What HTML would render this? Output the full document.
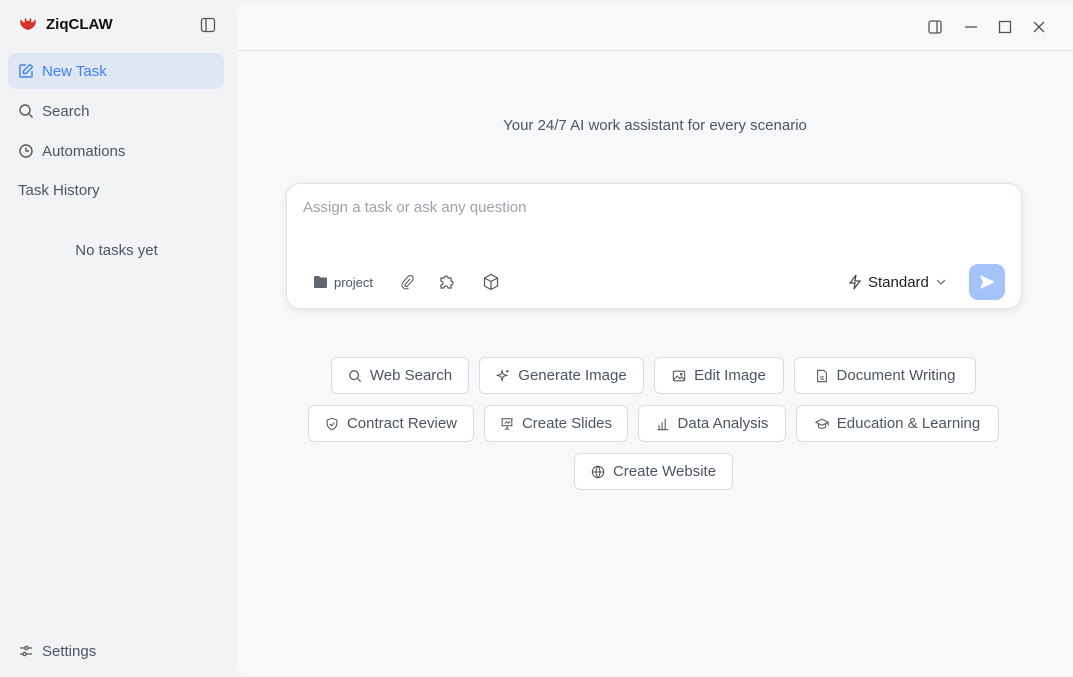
<!DOCTYPE html>
<html><head><style>
*{box-sizing:border-box;margin:0;padding:0}
body{width:1073px;height:677px;background:#f2f3f5;font-family:"Liberation Sans",sans-serif;position:relative;overflow:hidden;color:#333}
.abs{position:absolute}
.nav{position:absolute;left:8px;width:216px;height:36px;display:flex;align-items:center;padding-left:10px;font-size:15px;color:#4b5563;border-radius:8px}
.nav svg{margin-right:8px}
.main{position:absolute;left:237px;top:3px;width:836px;height:673px;background:#f7f8fa;border-radius:10px 0 0 10px}
.chip{position:absolute;height:37px;border:1px solid #d9dce1;border-radius:6px;background:#fff;display:flex;align-items:center;justify-content:center;font-size:15px;color:#4b5563}
.chip svg{margin-right:8px}
</style></head><body>
<svg class="abs" style="left:18px;top:15px" width="20" height="20" viewBox="0 0 20 20"><path d="M3 4c-2 4 0 9 7 11c7-2 9-7 7-11c-1 3-3 4-4 3c1-2 0-4-1-4c0 2-1 3-2 3s-2-1-2-3c-1 0-2 2-1 4c-1 1-3 0-4-3z" fill="#d7332a"/></svg>
<div class="abs" style="left:46px;top:16px;font-size:15px;font-weight:bold;color:#111">ZiqCLAW</div>
<svg class="abs" style="left:200px;top:17px" width="16" height="16" viewBox="0 0 16 16" fill="none" stroke="#555" stroke-width="1.3"><rect x="1.5" y="1.5" width="13" height="13" rx="2.5"/><path d="M6 1.5v13"/></svg>
<div class="nav" style="top:53px;background:#e1e7f2;color:#3b82f6"><svg width="16" height="16" viewBox="0 0 16 16" fill="none" stroke="#3b82f6" stroke-width="1.4"><path d="M8 2H3a1 1 0 0 0-1 1v10a1 1 0 0 0 1 1h10a1 1 0 0 0 1-1V8"/><path d="M12 1.5l2.5 2.5L8 10.5H5.5V8z"/></svg>New Task</div>
<div class="nav" style="top:93px"><svg width="16" height="16" viewBox="0 0 16 16" fill="none" stroke="#555" stroke-width="1.4"><circle cx="7" cy="7" r="5"/><path d="M11 11l3.5 3.5"/></svg>Search</div>
<div class="nav" style="top:133px"><svg width="16" height="16" viewBox="0 0 16 16" fill="none" stroke="#555" stroke-width="1.4"><circle cx="8" cy="8" r="6"/><path d="M8 4.5V8h3"/></svg>Automations</div>
<div class="abs" style="left:18px;top:182px;font-size:15px;color:#4b5563">Task History</div>
<div class="abs" style="left:0;width:233px;top:242px;text-align:center;font-size:15px;color:#4b5563">No tasks yet</div>
<div class="nav" style="top:633px"><svg width="16" height="16" viewBox="0 0 16 16" fill="none" stroke="#555" stroke-width="1.3"><path d="M2 5h5M10 5h4M2 11h3M8 11h6"/><circle cx="8.5" cy="5" r="1.6"/><circle cx="6.5" cy="11" r="1.6"/></svg>Settings</div>

<div class="main">
<div class="abs" style="left:0;right:0;top:47px;border-top:1px solid #e3e5e9"></div>
<svg class="abs" style="left:690px;top:16px" width="16" height="16" viewBox="0 0 16 16" fill="none" stroke="#555" stroke-width="1.3"><rect x="2" y="2" width="12" height="12" rx="2"/><path d="M10 2v12"/></svg>
<svg class="abs" style="left:726px;top:16px" width="16" height="16" viewBox="0 0 16 16" stroke="#555" stroke-width="1.3"><path d="M2 8h12"/></svg>
<svg class="abs" style="left:760px;top:16px" width="16" height="16" viewBox="0 0 16 16" fill="none" stroke="#555" stroke-width="1.3"><rect x="2.5" y="2.5" width="11" height="11"/></svg>
<svg class="abs" style="left:794px;top:16px" width="16" height="16" viewBox="0 0 16 16" stroke="#555" stroke-width="1.3"><path d="M3 3l10 10M13 3L3 13"/></svg>
<div class="abs" style="left:0;right:0;top:114px;text-align:center;font-size:15px;color:#4b5563">Your 24/7 AI work assistant for every scenario</div>
<div class="abs" style="left:49px;top:180px;width:736px;height:126px;background:#fff;border:1px solid #dfe3ea;border-radius:14px;box-shadow:0 2px 8px rgba(0,0,0,.08)">
 <div class="abs" style="left:16px;top:15px;font-size:15px;color:#9ca3af">Assign a task or ask any question</div>
 <svg class="abs" style="left:26px;top:91px" width="15" height="14" viewBox="0 0 15 14"><path d="M1 2a1 1 0 0 1 1-1h4l1.5 1.5H13a1 1 0 0 1 1 1V12a1 1 0 0 1-1 1H2a1 1 0 0 1-1-1z" fill="#5f6672"/></svg>
 <div class="abs" style="left:47px;top:91px;font-size:13px;color:#4b5563">project</div>
 <svg class="abs" style="left:112px;top:90px" width="16" height="16" viewBox="0 0 16 16" fill="none" stroke="#666" stroke-width="1.2"><path d="M11 5l-5 5.5a1.5 1.5 0 0 0 2 2l5.5-6a3 3 0 0 0-4.5-4L3.5 9a4 4 0 0 0 6 5"/></svg>
 <svg class="abs" style="left:151px;top:89px" width="18" height="18" viewBox="0 0 18 18" fill="none" stroke="#555" stroke-width="1.2"><path d="M3 5h3a2 2 0 1 1 4 0h3v3a2 2 0 1 1 0 4v3h-3a2 2 0 1 0-4 0H3v-3a2 2 0 1 0 0-4z"/></svg>
 <svg class="abs" style="left:195px;top:89px" width="18" height="18" viewBox="0 0 18 18" fill="none" stroke="#555" stroke-width="1.2"><path d="M9 1.5l6.5 3.5v8L9 16.5 2.5 13V5zM2.5 5L9 8.5 15.5 5M9 8.5v8"/></svg>
 <svg class="abs" style="left:560px;top:90px" width="16" height="16" viewBox="0 0 16 16" fill="none" stroke="#444" stroke-width="1.2"><path d="M9 1L3 9h5l-1 6 6-8H8z"/></svg>
 <div class="abs" style="left:581px;top:90px;font-size:15px;color:#222">Standard</div>
 <svg class="abs" style="left:648px;top:93px" width="12" height="10" viewBox="0 0 12 10" fill="none" stroke="#666" stroke-width="1.2"><path d="M2 3l4 4 4-4"/></svg>
 <div class="abs" style="left:682px;top:80px;width:36px;height:36px;border-radius:9px;background:#a4c3fb"><svg style="margin:9px" width="18" height="18" viewBox="0 0 18 18"><path d="M2 2l15 7-15 7 3-7z" fill="#fff"/></svg></div>
</div>
</div>
<div class="chip" style="left:331px;top:357px;width:138px"><svg width="14" height="14" viewBox="0 0 16 16" fill="none" stroke="#555" stroke-width="1.4"><circle cx="7" cy="7" r="5"/><path d="M11 11l3.5 3.5"/></svg>Web Search</div>
<div class="chip" style="left:479px;top:357px;width:165px"><svg width="14" height="14" viewBox="0 0 16 16" fill="none" stroke="#555" stroke-width="1.2"><path d="M7 2l1.3 4 4 1.3-4 1.3L7 13l-1.3-4.4-4-1.3 4-1.3zM13 1v3M11.5 2.5h3"/></svg>Generate Image</div>
<div class="chip" style="left:654px;top:357px;width:130px"><svg width="14" height="14" viewBox="0 0 16 16" fill="none" stroke="#555" stroke-width="1.2"><rect x="1.5" y="2.5" width="13" height="11" rx="1.5"/><path d="M2 12l4-4 3 3 2-2 3 3"/><circle cx="10.5" cy="6" r="1"/></svg>Edit Image</div>
<div class="chip" style="left:794px;top:357px;width:182px"><svg width="14" height="14" viewBox="0 0 16 16" fill="none" stroke="#555" stroke-width="1.2"><path d="M3 1.5h7l3 3v10H3zM6 9h4M6 11.5h4"/></svg>Document Writing</div>
<div class="chip" style="left:308px;top:405px;width:166px"><svg width="14" height="14" viewBox="0 0 16 16" fill="none" stroke="#555" stroke-width="1.2"><path d="M8 1.5l5.5 2v4.5c0 3-2.5 5.5-5.5 6.5-3-1-5.5-3.5-5.5-6.5V3.5zM5.5 8l2 2 3-3.5"/></svg>Contract Review</div>
<div class="chip" style="left:484px;top:405px;width:144px"><svg width="14" height="14" viewBox="0 0 16 16" fill="none" stroke="#555" stroke-width="1.2"><path d="M1.5 2h13M2.5 2v8h11V2M8 10v3M5.5 14.5L8 13l2.5 1.5M5.5 7.5l2-2 2 1.5 2-2"/></svg>Create Slides</div>
<div class="chip" style="left:638px;top:405px;width:148px"><svg width="14" height="14" viewBox="0 0 16 16" fill="none" stroke="#555" stroke-width="1.2"><path d="M2 14.5h12M3.5 9v5M7 6v8M10.5 2v12"/></svg>Data Analysis</div>
<div class="chip" style="left:796px;top:405px;width:203px"><svg width="14" height="14" viewBox="0 0 16 16" fill="none" stroke="#555" stroke-width="1.2"><path d="M1 6l7-3.5L15 6l-7 3.5zM4 7.5v4c2 2 6 2 8 0v-4M15 6v4"/></svg>Education &amp; Learning</div>
<div class="chip" style="left:574px;top:453px;width:159px"><svg width="14" height="14" viewBox="0 0 16 16" fill="none" stroke="#555" stroke-width="1.2"><circle cx="8" cy="8" r="6.5"/><path d="M1.5 8h13M8 1.5c-3 3.5-3 9.5 0 13M8 1.5c3 3.5 3 9.5 0 13"/></svg>Create Website</div>
</body></html>
